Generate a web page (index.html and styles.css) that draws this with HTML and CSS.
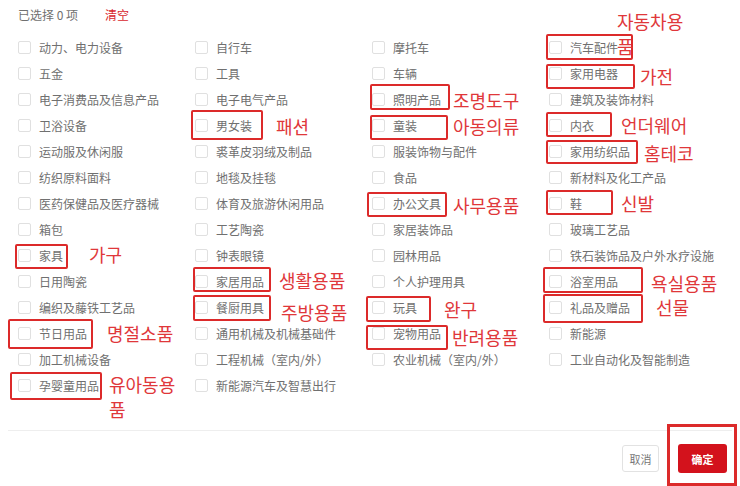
FILE: index.html
```html
<!DOCTYPE html>
<html lang="zh-CN">
<head>
<meta charset="utf-8">
<title>选择类目</title>
<link rel="stylesheet" href="styles.css">
</head>
<body>
<div class="dialog">
  <div class="summary"><span class="count">已选择 0 项</span><a class="clear">清空</a></div>
  <ul class="grid">
    <li class="item"><span class="cb"></span><span class="label">动力、电力设备</span></li>
    <li class="item"><span class="cb"></span><span class="label">自行车</span></li>
    <li class="item"><span class="cb"></span><span class="label">摩托车</span></li>
    <li class="item"><span class="cb"></span><span class="label">汽车配件</span></li>

    <li class="item"><span class="cb"></span><span class="label">五金</span></li>
    <li class="item"><span class="cb"></span><span class="label">工具</span></li>
    <li class="item"><span class="cb"></span><span class="label">车辆</span></li>
    <li class="item"><span class="cb"></span><span class="label">家用电器</span></li>

    <li class="item"><span class="cb"></span><span class="label">电子消费品及信息产品</span></li>
    <li class="item"><span class="cb"></span><span class="label">电子电气产品</span></li>
    <li class="item"><span class="cb"></span><span class="label">照明产品</span></li>
    <li class="item"><span class="cb"></span><span class="label">建筑及装饰材料</span></li>

    <li class="item"><span class="cb"></span><span class="label">卫浴设备</span></li>
    <li class="item"><span class="cb"></span><span class="label">男女装</span></li>
    <li class="item"><span class="cb"></span><span class="label">童装</span></li>
    <li class="item"><span class="cb"></span><span class="label">内衣</span></li>

    <li class="item"><span class="cb"></span><span class="label">运动服及休闲服</span></li>
    <li class="item"><span class="cb"></span><span class="label">裘革皮羽绒及制品</span></li>
    <li class="item"><span class="cb"></span><span class="label">服装饰物与配件</span></li>
    <li class="item"><span class="cb"></span><span class="label">家用纺织品</span></li>

    <li class="item"><span class="cb"></span><span class="label">纺织原料面料</span></li>
    <li class="item"><span class="cb"></span><span class="label">地毯及挂毯</span></li>
    <li class="item"><span class="cb"></span><span class="label">食品</span></li>
    <li class="item"><span class="cb"></span><span class="label">新材料及化工产品</span></li>

    <li class="item"><span class="cb"></span><span class="label">医药保健品及医疗器械</span></li>
    <li class="item"><span class="cb"></span><span class="label">体育及旅游休闲用品</span></li>
    <li class="item"><span class="cb"></span><span class="label">办公文具</span></li>
    <li class="item"><span class="cb"></span><span class="label">鞋</span></li>

    <li class="item"><span class="cb"></span><span class="label">箱包</span></li>
    <li class="item"><span class="cb"></span><span class="label">工艺陶瓷</span></li>
    <li class="item"><span class="cb"></span><span class="label">家居装饰品</span></li>
    <li class="item"><span class="cb"></span><span class="label">玻璃工艺品</span></li>

    <li class="item"><span class="cb"></span><span class="label">家具</span></li>
    <li class="item"><span class="cb"></span><span class="label">钟表眼镜</span></li>
    <li class="item"><span class="cb"></span><span class="label">园林用品</span></li>
    <li class="item"><span class="cb"></span><span class="label">铁石装饰品及户外水疗设施</span></li>

    <li class="item"><span class="cb"></span><span class="label">日用陶瓷</span></li>
    <li class="item"><span class="cb"></span><span class="label">家居用品</span></li>
    <li class="item"><span class="cb"></span><span class="label">个人护理用具</span></li>
    <li class="item"><span class="cb"></span><span class="label">浴室用品</span></li>

    <li class="item"><span class="cb"></span><span class="label">编织及藤铁工艺品</span></li>
    <li class="item"><span class="cb"></span><span class="label">餐厨用具</span></li>
    <li class="item"><span class="cb"></span><span class="label">玩具</span></li>
    <li class="item"><span class="cb"></span><span class="label">礼品及赠品</span></li>

    <li class="item"><span class="cb"></span><span class="label">节日用品</span></li>
    <li class="item"><span class="cb"></span><span class="label">通用机械及机械基础件</span></li>
    <li class="item"><span class="cb"></span><span class="label">宠物用品</span></li>
    <li class="item"><span class="cb"></span><span class="label">新能源</span></li>

    <li class="item"><span class="cb"></span><span class="label">加工机械设备</span></li>
    <li class="item"><span class="cb"></span><span class="label">工程机械（室内/外）</span></li>
    <li class="item"><span class="cb"></span><span class="label">农业机械（室内/外）</span></li>
    <li class="item"><span class="cb"></span><span class="label">工业自动化及智能制造</span></li>

    <li class="item"><span class="cb"></span><span class="label">孕婴童用品</span></li>
    <li class="item"><span class="cb"></span><span class="label">新能源汽车及智慧出行</span></li>
  </ul>
  <div class="footer">
    <button class="btn cancel">取消</button>
    <button class="btn ok">确定</button>
  </div>

  <div class="marks">
    <span class="box bA"></span><span class="note nA">자동차용품</span>
    <span class="box bB"></span><span class="note nB">가전</span>
    <span class="box bC"></span><span class="note nC">언더웨어</span>
    <span class="box bD"></span><span class="note nD">홈테코</span>
    <span class="box bE"></span><span class="note nE">신발</span>
    <span class="box bF"></span><span class="note nF">욕실용품</span>
    <span class="box bG"></span><span class="note nG">선물</span>
    <span class="box bH"></span><span class="note nH">조명도구</span>
    <span class="box bI"></span><span class="note nI">아동의류</span>
    <span class="box bJ"></span><span class="note nJ">사무용품</span>
    <span class="box bK"></span><span class="note nK">완구</span>
    <span class="box bL"></span><span class="note nL">반려용품</span>
    <span class="box bM"></span><span class="note nM">패션</span>
    <span class="box bN"></span><span class="note nN">생활용품</span>
    <span class="box bO"></span><span class="note nO">주방용품</span>
    <span class="box bP"></span><span class="note nP">가구</span>
    <span class="box bQ"></span><span class="note nQ">명절소품</span>
    <span class="box bR"></span><span class="note nR">유아동용품</span>
    <span class="box thick bS"></span>
  </div>
</div>
</body>
</html>
```

FILE: styles.css
```css
* { box-sizing: border-box; }
html, body { margin: 0; padding: 0; background: #fff; }
body {
  font-family: "Noto Sans CJK SC", "Noto Sans", sans-serif;
  color: #666;
  width: 740px;
  height: 486px;
  overflow: hidden;
}
.dialog {
  position: relative;
  width: 740px;
  height: 486px;
  padding: 0 8px;
}
.summary {
  height: 28px;
  display: flex;
  align-items: center;
  padding-left: 10px;
  font-size: 12px;
  color: #707070;
}
.clear {
  margin-left: 27px;
  color: #d9272e;
}
.grid {
  list-style: none;
  margin: 6px 0 0 0;
  padding: 0 0 0 10px;
  display: grid;
  grid-template-columns: repeat(4, 177px);
  grid-auto-rows: 26px;
}
.item {
  display: flex;
  align-items: center;
  gap: 8px;
  font-size: 12px;
  color: #707070;
  white-space: nowrap;
}
.cb {
  width: 13px;
  height: 13px;
  border: 1px solid #e0e0e0;
  border-radius: 2px;
  background: #fff;
  flex: none;
}
.footer {
  margin-top: 32px;
  border-top: 1px solid #eeeeee;
  padding-top: 13px;
  padding-right: 5px;
  display: flex;
  justify-content: flex-end;
  align-items: center;
  gap: 19px;
}
.btn {
  font-family: "Noto Sans CJK SC", sans-serif;
  font-size: 11px;
  border-radius: 3px;
  padding: 0;
  cursor: pointer;
}
.cancel {
  width: 37px;
  height: 27px;
  border: 1px solid #e2e2e2;
  background: #fff;
  color: #777;
}
.ok {
  width: 49px;
  height: 29px;
  border: none;
  background: #d3121c;
  color: #fff;
  font-weight: bold;
}

/* annotation overlay */
.marks {
  position: absolute;
  inset: 0;
  pointer-events: none;
}
.box {
  position: absolute;
  border: 2px solid #dc2a2a;
  border-radius: 2px;
}
.box.thick { border-width: 3px; border-radius: 0; }
.note {
  position: absolute;
  font-family: "Noto Sans CJK KR", sans-serif;
  font-size: 18px;
  line-height: 17px;
  color: #e0373a;
  white-space: nowrap;
}
.nA, .nR { white-space: normal; word-break: break-all; width: 74px; line-height: 25px; }

.bA { left: 546px; top: 34px; width: 87px; height: 26px; }
.bB { left: 546px; top: 64px; width: 89px; height: 25px; }
.bC { left: 546px; top: 112px; width: 66px; height: 25px; }
.bD { left: 546px; top: 140px; width: 92px; height: 24px; }
.bE { left: 546px; top: 190px; width: 67px; height: 25px; }
.bF { left: 543px; top: 267px; width: 100px; height: 26px; }
.bG { left: 543px; top: 294px; width: 100px; height: 29px; }
.bH { left: 370px; top: 84px; width: 80px; height: 26px; }
.bI { left: 370px; top: 115px; width: 78px; height: 25px; }
.bJ { left: 367px; top: 192px; width: 80px; height: 25px; }
.bK { left: 366px; top: 296px; width: 65px; height: 26px; }
.bL { left: 366px; top: 325px; width: 82px; height: 25px; }
.bM { left: 191px; top: 110px; width: 72px; height: 30px; }
.bN { left: 193px; top: 267px; width: 78px; height: 25px; }
.bO { left: 193px; top: 295px; width: 78px; height: 26px; }
.bP { left: 15px; top: 244px; width: 53px; height: 25px; }
.bQ { left: 8px; top: 319px; width: 85px; height: 30px; }
.bR { left: 10px; top: 372px; width: 92px; height: 28px; }
.bS { left: 667px; top: 424px; width: 70px; height: 62px; }

.nA { left: 617px; top: 9px; }
.nB { left: 640px; top: 68px; }
.nC { left: 621px; top: 117px; }
.nD { left: 644px; top: 145px; }
.nE { left: 621px; top: 195px; }
.nF { left: 651px; top: 275px; }
.nG { left: 656px; top: 299px; }
.nH { left: 453px; top: 92px; }
.nI { left: 453px; top: 118px; }
.nJ { left: 453px; top: 197px; }
.nK { left: 444px; top: 301px; }
.nL { left: 452px; top: 329px; }
.nM { left: 276px; top: 118px; }
.nN { left: 279px; top: 272px; }
.nO { left: 281px; top: 304px; }
.nP { left: 89px; top: 246px; }
.nQ { left: 107px; top: 325px; }
.nR { left: 109px; top: 372px; }
```
